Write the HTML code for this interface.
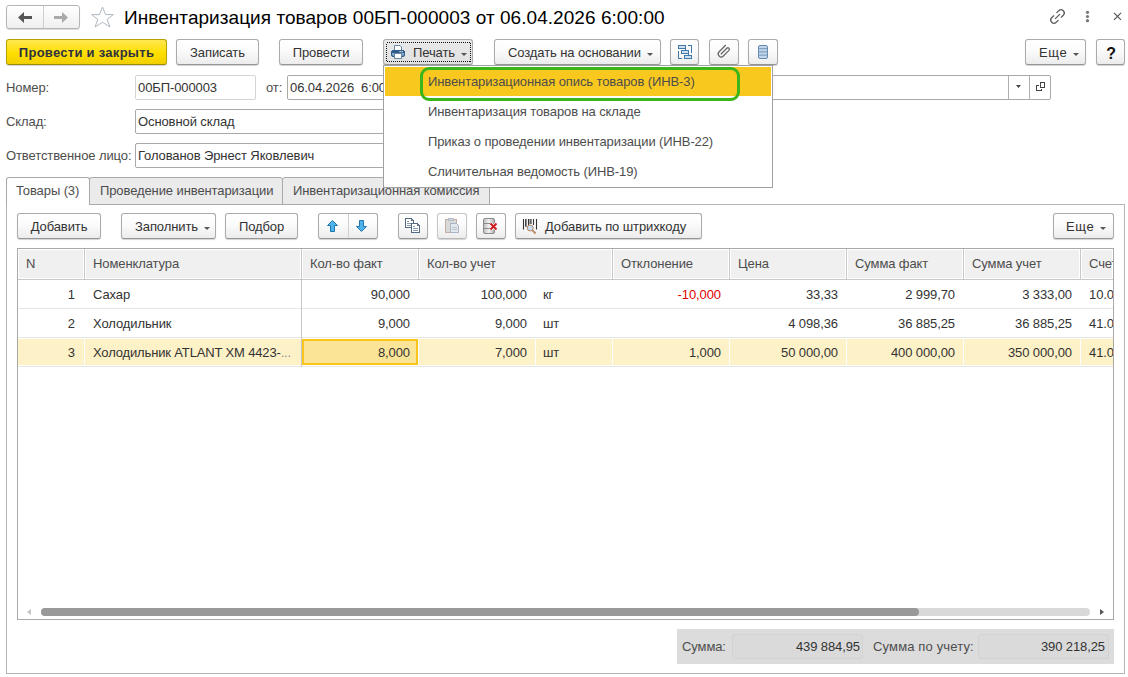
<!DOCTYPE html>
<html><head><meta charset="utf-8">
<style>
*{box-sizing:border-box;margin:0;padding:0}
html,body{width:1128px;height:677px;overflow:hidden;background:#fff;font-family:"Liberation Sans",sans-serif;font-size:13px;color:#4d4d4d;letter-spacing:-0.1px}
.a{position:absolute}
.t{position:absolute;white-space:nowrap;line-height:15px}
.btn{position:absolute;height:26px;border:1px solid #ababab;border-bottom-color:#959595;border-radius:3px;background:linear-gradient(#ffffff 0%,#fbfbfb 45%,#ececec 100%);box-shadow:0 1px 1px rgba(0,0,0,.18);color:#333;text-align:center;line-height:24px;padding-top:1px;white-space:nowrap}
.btn.y{background:linear-gradient(#ffe850 0%,#ffdf00 55%,#f1cf00 100%);border-color:#b9a100;border-bottom-color:#a08a00;font-weight:bold;color:#2f3140;letter-spacing:0.28px}
.arr{display:inline-block;width:0;height:0;border-left:3px solid transparent;border-right:3px solid transparent;border-top:3px solid #555;vertical-align:middle;margin-left:6px;position:relative;top:1px}
.fld{position:absolute;height:25px;border:1px solid #a9a9a9;border-radius:2px;background:#fff;color:#333;line-height:23px;padding-left:2px;white-space:nowrap;overflow:hidden}
.hd{position:absolute;top:249px;height:30px;background:#f0f0f0;border:1px solid #fff;line-height:28px;padding-left:8px;color:#4d4d4d}
.c{position:absolute;line-height:28px;color:#333;white-space:nowrap}
.r{text-align:right}
</style></head><body>

<!-- title bar -->
<div class="a" style="left:6px;top:5px;width:74px;height:24px;border:1px solid #b5b5b5;border-radius:3px;background:linear-gradient(#fff,#efefef);box-shadow:0 1px 1px rgba(0,0,0,.15)"></div>
<div class="a" style="left:43px;top:6px;width:1px;height:22px;background:#d0d0d0"></div>
<div class="t" style="left:124px;top:7px;font-size:19px;line-height:21px;color:#000;letter-spacing:0.05px">Инвентаризация товаров 00БП-000003 от 06.04.2026 6:00:00</div>

<!-- toolbar -->
<div class="btn y" style="left:6px;top:39px;width:161px">Провести и закрыть</div>
<div class="btn" style="left:176px;top:39px;width:83px">Записать</div>
<div class="btn" style="left:279px;top:39px;width:84px">Провести</div>
<div class="btn" style="left:383px;top:39px;width:90px;background:linear-gradient(#e9e9e9,#e1e1e1);text-align:left;padding-left:29px">Печать<span class="arr"></span></div>
<div class="btn" style="left:494px;top:39px;width:167px;text-align:left;padding-left:13px">Создать на основании<span class="arr"></span></div>
<div class="btn" style="left:670px;top:39px;width:29px"></div>
<div class="btn" style="left:709px;top:39px;width:30px"></div>
<div class="btn" style="left:748px;top:39px;width:30px"></div>
<div class="btn" style="left:1025px;top:39px;width:61px;text-align:left;padding-left:13px;letter-spacing:0.6px">Еще<span class="arr"></span></div>
<div class="btn" style="left:1096px;top:39px;width:29px;font-weight:bold;font-size:16px;color:#111;line-height:26px;padding-left:1px">?</div>

<!-- fields -->
<div class="t" style="left:6px;top:80px">Номер:</div>
<div class="fld" style="left:135px;top:75px;width:121px;border-color:#d4d4d4">00БП-000003</div>
<div class="t" style="left:266px;top:80px">от:</div>
<div class="fld" style="left:287px;top:75px;width:764px">06.04.2026&nbsp; 6:00:00</div>
<div class="t" style="left:6px;top:114px">Склад:</div>
<div class="fld" style="left:135px;top:109px;width:600px">Основной склад</div>
<div class="t" style="left:6px;top:148px">Ответственное лицо:</div>
<div class="fld" style="left:135px;top:143px;width:600px">Голованов Эрнест Яковлевич</div>

<!-- tabs -->
<div class="a" style="left:6px;top:204px;width:1119px;height:470px;border:1px solid #b4b4b4"></div>
<div class="a" style="left:89px;top:177px;width:194px;height:28px;background:#ebebeb;border:1px solid #a9a9a9;border-radius:3px 3px 0 0"></div>
<div class="a" style="left:282px;top:177px;width:208px;height:28px;background:#ebebeb;border:1px solid #a9a9a9;border-radius:3px 3px 0 0"></div>
<div class="a" style="left:6px;top:177px;width:84px;height:28px;background:#fff;border:1px solid #a9a9a9;border-bottom:none;border-radius:3px 3px 0 0"></div>
<div class="t" style="left:16px;top:183px">Товары (3)</div>
<div class="t" style="left:100px;top:183px">Проведение инвентаризации</div>
<div class="t" style="left:293px;top:183px">Инвентаризационная комиссия</div>

<!-- table toolbar -->
<div class="btn" style="left:17px;top:213px;width:84px">Добавить</div>
<div class="btn" style="left:121px;top:213px;width:95px;text-align:left;padding-left:13px">Заполнить<span class="arr"></span></div>
<div class="btn" style="left:225px;top:213px;width:73px">Подбор</div>
<div class="btn" style="left:318px;top:213px;width:60px"></div>
<div class="a" style="left:348px;top:214px;width:1px;height:24px;background:#d0d0d0"></div>
<div class="btn" style="left:398px;top:213px;width:30px"></div>
<div class="btn" style="left:437px;top:213px;width:30px;border-color:#c6c6c6;border-bottom-color:#b9b9b9"></div>
<div class="btn" style="left:476px;top:213px;width:30px"></div>
<div class="btn" style="left:515px;top:213px;width:187px;text-align:left;padding-left:29px">Добавить по штрихкоду</div>
<div class="btn" style="left:1053px;top:213px;width:61px;text-align:left;padding-left:12px;letter-spacing:0.6px">Еще<span class="arr"></span></div>

<!-- icons -->
<svg class="a" style="left:0;top:0" width="1128" height="677" viewBox="0 0 1128 677">
<defs>
<linearGradient id="pb" x1="0" y1="0" x2="0" y2="1"><stop offset="0" stop-color="#2e5b88"/><stop offset="0.35" stop-color="#2e5b88"/><stop offset="0.5" stop-color="#8fb2d4"/><stop offset="1" stop-color="#5f8ab5"/></linearGradient>
<linearGradient id="gs" x1="0" y1="0" x2="1" y2="0"><stop offset="0" stop-color="#bdbdbd"/><stop offset="0.5" stop-color="#f2f2f2"/><stop offset="1" stop-color="#a8a8a8"/></linearGradient>
</defs>
<!-- nav arrows -->
<polygon points="18,17.5 24,12 24,16 32,16 32,19 24,19 24,23" fill="#555"/>
<polygon points="68,17.5 62,12 62,16 54,16 54,19 62,19 62,23" fill="#aaa"/>
<!-- star -->
<polygon points="102.5,7 105.6,14.6 113.3,14.6 107.1,19.5 110,27 102.5,22.3 95,27 97.9,19.5 91.7,14.6 99.4,14.6" fill="none" stroke="#b0b8c2" stroke-width="1" stroke-linejoin="miter"/>
<!-- link -->
<g transform="translate(1057.5,16.5) rotate(-45)" fill="none" stroke="#5c5c5c" stroke-width="1.25" stroke-linecap="round">
<path d="M-2.2,-3.2 H-5 A3.2,3.2 0 0 0 -5,3.2 H-2.2"/>
<path d="M2.2,-3.2 H5 A3.2,3.2 0 0 1 5,3.2 H2.2"/>
<path d="M-3,0 H3"/>
</g>
<!-- dots -->
<circle cx="1087.5" cy="12.3" r="1.6" fill="#777"/><circle cx="1087.5" cy="16.5" r="1.6" fill="#777"/><circle cx="1087.5" cy="20.7" r="1.6" fill="#777"/>
<!-- close -->
<path d="M1114,12.8 L1121,19.8 M1121,12.8 L1114,19.8" stroke="#555" stroke-width="1.2"/>
<!-- print focus -->
<rect x="386.5" y="42.5" width="84" height="19" fill="none" stroke="#111" stroke-width="1" stroke-dasharray="1,1" shape-rendering="crispEdges"/>
<!-- printer -->
<path d="M394.5,45.5 H400 L401.5,47 V51 H394.5 Z" fill="#fff" stroke="#6a87a6"/>
<rect x="391.5" y="50.5" width="13" height="6" rx="1.5" fill="url(#pb)" stroke="#2e5b88"/>
<rect x="394.5" y="53.5" width="7" height="5" fill="#fff" stroke="#6a87a6"/>
<rect x="399.5" y="51" width="1.2" height="1.2" fill="#fff"/><rect x="401.5" y="51" width="1.2" height="1.2" fill="#fff"/>
<!-- structure -->
<g stroke="#3f79aa" stroke-width="1" fill="#cfe0f0" shape-rendering="crispEdges">
<rect x="678.5" y="45.5" width="7" height="3"/>
<rect x="681.5" y="50.5" width="7" height="3"/>
<rect x="684.5" y="55.5" width="7" height="3"/>
<path d="M685.5,49 V50 M688.5,54 V55" fill="none"/>
<path d="M678.5,51 V58.5 H682 M688,45.5 H691.5 V53" fill="none"/>
</g>
<!-- paperclip -->
<g transform="translate(723.5,51.6) rotate(45)" fill="none" stroke="#666" stroke-width="1.25">
<path d="M-3,-6.3 V3.2 A3,3 0 0 0 3,3.2 V-4.7 A1.5,1.5 0 0 0 0,-4.7 V3.8"/>
</g>
<!-- list -->
<rect x="758.5" y="45.5" width="9" height="13" rx="1.5" fill="#c2d7ea" stroke="#678bb0"/>
<path d="M759,48.7 H767 M759,51.9 H767 M759,55.1 H767" stroke="#7394b5" stroke-width="1"/>
<!-- date field buttons -->
<path d="M1008.5,76 V99 M1029.5,76 V99" stroke="#b0b0b0"/>
<polygon points="1016,85 1021,85 1018.5,88" fill="#444"/>
<path d="M1040.5,82.5 H1044.5 V87.5 H1040.5 Z M1038.5,85.5 H1036.5 V90.5 H1041.5 V88.5" fill="none" stroke="#444" stroke-width="1" shape-rendering="crispEdges"/>
<!-- up/down -->
<polygon points="332.5,220.5 337.5,225.5 334.5,225.5 334.5,231.5 330.5,231.5 330.5,225.5 327.5,225.5" fill="#4fb3ec" stroke="#2276b0" stroke-width="1" stroke-linejoin="miter"/>
<polygon points="361.5,231.5 366.5,226.5 363.5,226.5 363.5,220.5 359.5,220.5 359.5,226.5 356.5,226.5" fill="#4fb3ec" stroke="#2276b0" stroke-width="1"/>
<!-- copy -->
<g stroke="#556a84" stroke-width="1" fill="#fff" shape-rendering="crispEdges">
<path d="M405.5,218.5 H411.5 L413.5,220.5 V227.5 H405.5 Z"/>
<path d="M411.5,223.5 H417.5 L419.5,225.5 V232.5 H411.5 Z"/>
</g>
<path d="M411,218.5 V221 H413.5 Z M417,223.5 V226 H419.5 Z" fill="#556a84"/>
<path d="M407,221.5 H409 M407,223.5 H411 M407,225.5 H411 M413,226.5 H415 M413,228.5 H418 M413,230.5 H418" stroke="#8797aa" stroke-width="1" shape-rendering="crispEdges"/>
<!-- paste disabled -->
<rect x="445.5" y="219.5" width="11" height="12.5" fill="#d9d9d9" stroke="#c4afa4" shape-rendering="crispEdges"/>
<rect x="448.5" y="218.5" width="5" height="2" fill="#cdd2d9" stroke="#b8bec7" stroke-width="1" shape-rendering="crispEdges"/>
<path d="M450.5,223.5 H456.5 L458.5,225.5 V232.5 H450.5 Z" fill="#e4e7eb" stroke="#a8b5c5" shape-rendering="crispEdges"/>
<path d="M452,227.5 H457 M452,229.5 H457" stroke="#b9c5d3" shape-rendering="crispEdges"/>
<!-- delete -->
<rect x="483.5" y="218.5" width="11" height="15" rx="1.5" fill="url(#gs)" stroke="#8a8a8a"/>
<path d="M484,223.5 H494 M484,228.5 H494" stroke="#8a8a8a"/>
<path d="M490.5,223.5 L496.5,229.5 M496.5,223.5 L490.5,229.5" stroke="#fff" stroke-width="3.4"/>
<path d="M490.5,223.5 L496.5,229.5 M496.5,223.5 L490.5,229.5" stroke="#cc1c1c" stroke-width="2"/>
<!-- barcode -->
<path d="M523.5,219 V229.5 M526,219 V227 M528.5,219 V225 M531,219 V224 M533.5,219 V225 M536.5,219 V229.5" stroke="#333" stroke-width="1.1"/>
<path d="M525.5,219 V226 M530,219 V224" stroke="#333" stroke-width="0.8"/>
<line x1="532.3" y1="230.2" x2="535.6" y2="233.5" stroke="#b8875f" stroke-width="1.8"/>
<circle cx="530.2" cy="228" r="3" fill="#c4dcf5" stroke="#b8875f" stroke-width="1"/>
</svg>

<!-- table -->
<div class="a" style="left:17px;top:248px;width:1097px;height:372px;border:1px solid #a9a9a9"></div>
<div class="a" style="left:18px;top:249px;width:1095px;height:30px;background:#f0f0f0"></div>
<div class="a" style="left:18px;top:249px;width:66px;height:30px;border:1px solid #fff"></div>
<div class="t" style="left:26px;top:256px">N</div>
<div class="a" style="left:85px;top:249px;width:216px;height:30px;border:1px solid #fff"></div>
<div class="t" style="left:93px;top:256px">Номенклатура</div>
<div class="a" style="left:302px;top:249px;width:116px;height:30px;border:1px solid #fff"></div>
<div class="t" style="left:310px;top:256px">Кол-во факт</div>
<div class="a" style="left:419px;top:249px;width:193px;height:30px;border:1px solid #fff"></div>
<div class="t" style="left:427px;top:256px">Кол-во учет</div>
<div class="a" style="left:613px;top:249px;width:116px;height:30px;border:1px solid #fff"></div>
<div class="t" style="left:621px;top:256px">Отклонение</div>
<div class="a" style="left:730px;top:249px;width:116px;height:30px;border:1px solid #fff"></div>
<div class="t" style="left:738px;top:256px">Цена</div>
<div class="a" style="left:847px;top:249px;width:116px;height:30px;border:1px solid #fff"></div>
<div class="t" style="left:855px;top:256px">Сумма факт</div>
<div class="a" style="left:964px;top:249px;width:116px;height:30px;border:1px solid #fff"></div>
<div class="t" style="left:972px;top:256px">Сумма учет</div>
<div class="a" style="left:1081px;top:249px;width:32px;height:30px;border:1px solid #fff"></div>
<div class="a" style="left:1089px;top:256px;width:24px;overflow:hidden;white-space:nowrap;line-height:15px">Счет</div>
<div class="a" style="left:84px;top:249px;width:1px;height:30px;background:#c8c8c8"></div>
<div class="a" style="left:301px;top:249px;width:1px;height:30px;background:#c8c8c8"></div>
<div class="a" style="left:418px;top:249px;width:1px;height:30px;background:#c8c8c8"></div>
<div class="a" style="left:612px;top:249px;width:1px;height:30px;background:#c8c8c8"></div>
<div class="a" style="left:729px;top:249px;width:1px;height:30px;background:#c8c8c8"></div>
<div class="a" style="left:846px;top:249px;width:1px;height:30px;background:#c8c8c8"></div>
<div class="a" style="left:963px;top:249px;width:1px;height:30px;background:#c8c8c8"></div>
<div class="a" style="left:1080px;top:249px;width:1px;height:30px;background:#c8c8c8"></div>
<div class="a" style="left:18px;top:279px;width:1095px;height:1px;background:#c8c8c8"></div>
<div class="a" style="left:18px;top:308px;width:1095px;height:1px;background:#e6e6e6"></div>
<div class="a" style="left:18px;top:337px;width:1095px;height:1px;background:#e6e6e6"></div>
<div class="a" style="left:18px;top:366px;width:1095px;height:1px;background:#e6e6e6"></div>
<div class="a" style="left:18px;top:339px;width:1095px;height:26px;background:#fdf1c7"></div>
<div class="a" style="left:84px;top:339px;width:1px;height:26px;background:#fff"></div>
<div class="a" style="left:418px;top:339px;width:1px;height:26px;background:#fff"></div>
<div class="a" style="left:535px;top:339px;width:1px;height:26px;background:#fff"></div>
<div class="a" style="left:612px;top:339px;width:1px;height:26px;background:#fff"></div>
<div class="a" style="left:729px;top:339px;width:1px;height:26px;background:#fff"></div>
<div class="a" style="left:846px;top:339px;width:1px;height:26px;background:#fff"></div>
<div class="a" style="left:963px;top:339px;width:1px;height:26px;background:#fff"></div>
<div class="a" style="left:1080px;top:339px;width:1px;height:26px;background:#fff"></div>
<div class="a" style="left:302px;top:339px;width:116px;height:26px;background:#fce497;border:2px solid #f8c51c"></div>
<div class="a" style="left:301px;top:249px;width:1px;height:118px;background:#c8c8c8"></div>
<div class="t r" style="right:1053px;top:287px;color:#333">1</div>
<div class="t" style="left:93px;top:287px;color:#333">Сахар</div>
<div class="t r" style="right:718px;top:287px;color:#333">90,000</div>
<div class="t r" style="right:601px;top:287px;color:#333">100,000</div>
<div class="t" style="left:543px;top:287px;color:#333">кг</div>
<div class="t r" style="right:407px;top:287px;color:#e00000">-10,000</div>
<div class="t r" style="right:290px;top:287px;color:#333">33,33</div>
<div class="t r" style="right:173px;top:287px;color:#333">2 999,70</div>
<div class="t r" style="right:56px;top:287px;color:#333">3 333,00</div>
<div class="a" style="left:1081px;top:287px;width:32px;overflow:hidden;white-space:nowrap;line-height:15px;color:#333;padding-left:8px">10.0</div>
<div class="t r" style="right:1053px;top:316px;color:#333">2</div>
<div class="t" style="left:93px;top:316px;color:#333">Холодильник</div>
<div class="t r" style="right:718px;top:316px;color:#333">9,000</div>
<div class="t r" style="right:601px;top:316px;color:#333">9,000</div>
<div class="t" style="left:543px;top:316px;color:#333">шт</div>
<div class="t r" style="right:290px;top:316px;color:#333">4 098,36</div>
<div class="t r" style="right:173px;top:316px;color:#333">36 885,25</div>
<div class="t r" style="right:56px;top:316px;color:#333">36 885,25</div>
<div class="a" style="left:1081px;top:316px;width:32px;overflow:hidden;white-space:nowrap;line-height:15px;color:#333;padding-left:8px">41.0</div>
<div class="t r" style="right:1053px;top:345px;color:#333">3</div>
<div class="t" style="left:93px;top:345px;color:#333;letter-spacing:-0.15px">Холодильник ATLANT XM 4423-<span style="color:#8a8a8a">...</span></div>
<div class="t r" style="right:718px;top:345px;color:#333">8,000</div>
<div class="t r" style="right:601px;top:345px;color:#333">7,000</div>
<div class="t" style="left:543px;top:345px;color:#333">шт</div>
<div class="t r" style="right:407px;top:345px;color:#333">1,000</div>
<div class="t r" style="right:290px;top:345px;color:#333">50 000,00</div>
<div class="t r" style="right:173px;top:345px;color:#333">400 000,00</div>
<div class="t r" style="right:56px;top:345px;color:#333">350 000,00</div>
<div class="a" style="left:1081px;top:345px;width:32px;overflow:hidden;white-space:nowrap;line-height:15px;color:#333;padding-left:8px">41.0</div>
<div class="a" style="left:41px;top:608px;width:1049px;height:8px;border-radius:4px;background:#d9d9d9"></div>
<div class="a" style="left:41px;top:608px;width:878px;height:8px;border-radius:4px;background:#999"></div>
<div class="a" style="left:27px;top:609px;width:0;height:0;border-top:3px solid transparent;border-bottom:3px solid transparent;border-right:4px solid #c4c4c4"></div>
<div class="a" style="left:1100px;top:609px;width:0;height:0;border-top:3px solid transparent;border-bottom:3px solid transparent;border-left:4px solid #555"></div>
<div class="a" style="left:677px;top:629px;width:437px;height:35px;background:#dcdcdc"></div>
<div class="t" style="left:682px;top:639px">Сумма:</div>
<div class="a" style="left:732px;top:634px;width:131px;height:25px;border:1px solid #d2d2d2;border-radius:3px;background:#dadada"></div>
<div class="t r" style="right:268px;top:639px;color:#333">439 884,95</div>
<div class="t" style="left:873px;top:639px;letter-spacing:0.15px">Сумма по учету:</div>
<div class="a" style="left:978px;top:634px;width:131px;height:25px;border:1px solid #d2d2d2;border-radius:3px;background:#dadada"></div>
<div class="t r" style="right:23px;top:639px;color:#333">390 218,25</div>
<div class="a" style="left:383px;top:65px;width:390px;height:123px;background:#fff;border:1px solid #a0a0a0"></div>
<div class="a" style="left:385px;top:67px;width:386px;height:29px;background:#f9c81e"></div>
<div class="a" style="left:420px;top:67px;width:320px;height:34px;border:3px solid #3cb51a;border-radius:9px"></div>
<div class="t" style="left:428px;top:74px;color:#4d4d4d">Инвентаризационная опись товаров (ИНВ-3)</div>
<div class="t" style="left:428px;top:104px;color:#4d4d4d">Инвентаризация товаров на складе</div>
<div class="t" style="left:428px;top:134px;color:#4d4d4d">Приказ о проведении инвентаризации (ИНВ-22)</div>
<div class="t" style="left:428px;top:164px;color:#4d4d4d">Сличительная ведомость (ИНВ-19)</div>

</body></html>
